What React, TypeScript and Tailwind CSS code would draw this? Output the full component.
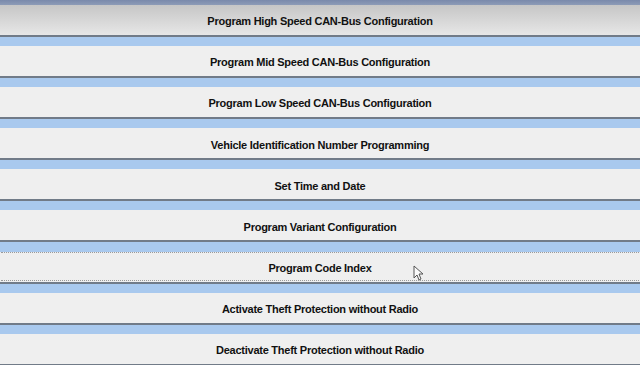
import React from 'react';

const items = [
  'Program High Speed CAN-Bus Configuration',
  'Program Mid Speed CAN-Bus Configuration',
  'Program Low Speed CAN-Bus Configuration',
  'Vehicle Identification Number Programming',
  'Set Time and Date',
  'Program Variant Configuration',
  'Program Code Index',
  'Activate Theft Protection without Radio',
  'Deactivate Theft Protection without Radio',
];

const Cursor = () => (
  <svg width="10" height="16" viewBox="0 0 10 16" className="absolute left-[413px] top-[265px]">
    <path d="M1 1 L1 13 L4 10 L6 15 L8 14 L6 9 L10 9 Z" fill="#fafafa" stroke="#555" strokeWidth="1" strokeLinejoin="round" />
  </svg>
);

export default function App() {
  return (
    <div className="relative w-[640px] h-[365px] overflow-hidden bg-[#a9c9ee] font-['Liberation_Sans',Arial,sans-serif]">
      <div className="h-[5px] bg-gradient-to-b from-[#7a8aab] to-[#8d9bb7]" />
      {items.map((label, i) => (
        <div key={label} className="h-[41.1px] flex flex-col">
          <button
            className={
              'h-[32px] w-full flex items-center justify-center pt-[3px] text-[11px] font-bold tracking-[-0.25px] text-[#111] border-b-2 border-[#717b88] ' +
              (i === 0
                ? 'bg-gradient-to-b from-[#c6c6c6] to-[#e7e7e7]'
                : 'bg-[#efefef]')
            }
          >
            {i === 6 ? (
              <span className="w-[638px] h-[29px] -mt-[3px] pt-[3px] flex items-center justify-center border-y border-dotted border-[#9a9a9a]">
                {label}
              </span>
            ) : (
              label
            )}
          </button>
          <div className="flex-1 bg-[#a9c9ee]" />
        </div>
      ))}
      <Cursor />
    </div>
  );
}
